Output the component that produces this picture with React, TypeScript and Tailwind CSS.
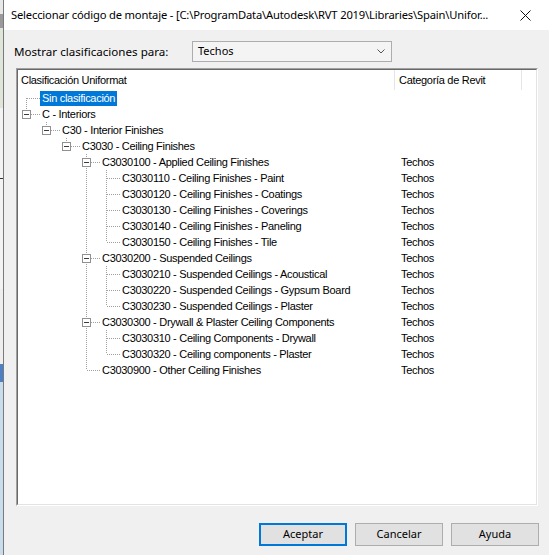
import React from "react";

type Node = { level: number; label: string; kids?: boolean; cat?: string; sel?: boolean };

const rows: Node[] = [
  { level: 0, label: "Sin clasificación", sel: true },
  { level: 0, label: "C - Interiors", kids: true },
  { level: 1, label: "C30 - Interior Finishes", kids: true },
  { level: 2, label: "C3030 - Ceiling Finishes", kids: true },
  { level: 3, label: "C3030100 - Applied Ceiling Finishes", kids: true, cat: "Techos" },
  { level: 4, label: "C3030110 - Ceiling Finishes - Paint", cat: "Techos" },
  { level: 4, label: "C3030120 - Ceiling Finishes - Coatings", cat: "Techos" },
  { level: 4, label: "C3030130 - Ceiling Finishes - Coverings", cat: "Techos" },
  { level: 4, label: "C3030140 - Ceiling Finishes - Paneling", cat: "Techos" },
  { level: 4, label: "C3030150 - Ceiling Finishes - Tile", cat: "Techos" },
  { level: 3, label: "C3030200 - Suspended Ceilings", kids: true, cat: "Techos" },
  { level: 4, label: "C3030210 - Suspended Ceilings - Acoustical", cat: "Techos" },
  { level: 4, label: "C3030220 - Suspended Ceilings - Gypsum Board", cat: "Techos" },
  { level: 4, label: "C3030230 - Suspended Ceilings - Plaster", cat: "Techos" },
  { level: 3, label: "C3030300 - Drywall & Plaster Ceiling Components", kids: true, cat: "Techos" },
  { level: 4, label: "C3030310 - Ceiling Components - Drywall", cat: "Techos" },
  { level: 4, label: "C3030320 - Ceiling components - Plaster", cat: "Techos" },
  { level: 3, label: "C3030900 - Other Ceiling Finishes", cat: "Techos" },
];

// does row i have a following sibling at the same level
const hasNext = (i: number) => {
  for (let j = i + 1; j < rows.length; j++) {
    if (rows[j].level < rows[i].level) return false;
    if (rows[j].level === rows[i].level) return true;
  }
  return false;
};

const ancestorAt = (i: number, lvl: number) => {
  for (let j = i; j >= 0; j--) if (rows[j].level === lvl) return j;
  return -1;
};

const LINE = "#a0a0a0";

function Connector({ i }: { i: number }) {
  const r = rows[i];
  const top = i === 0 ? 8 : 0;
  const bottom = hasNext(i) ? 16 : 8;
  return (
    <svg width="22" height="16" className="shrink-0" shapeRendering="crispEdges">
      <line x1="8.5" y1={top} x2="8.5" y2={bottom} stroke={LINE} strokeDasharray="1 1" />
      <line x1="9" y1="8.5" x2="22" y2="8.5" stroke={LINE} strokeDasharray="1 1" />
      {r.kids && (
        <>
          <rect x="4.5" y="4.5" width="8" height="8" fill="#fff" stroke="#919191" />
          <line x1="6" y1="8.5" x2="11" y2="8.5" stroke="#3c3c3c" />
        </>
      )}
    </svg>
  );
}

function TreeRow({ i }: { i: number }) {
  const r = rows[i];
  const cols = Array.from({ length: r.level }, (_, l) => hasNext(ancestorAt(i, l)));
  return (
    <div className="flex h-[16px] items-center">
      <div className="flex w-[377px] items-center">
        {cols.map((full, l) => (
          <svg key={l} width="20" height="16" className="shrink-0" shapeRendering="crispEdges">
            {full && <line x1="8.5" y1="0" x2="8.5" y2="16" stroke={LINE} strokeDasharray="1 1" />}
          </svg>
        ))}
        <Connector i={i} />
        <span
          className={`h-[15px] whitespace-nowrap px-[2px] leading-[15px] ${
            r.sel ? "bg-[#0078d7] text-white" : "text-black"
          }`}
        >
          {r.label}
        </span>
      </div>
      <span className="pl-[6px] text-black">{r.cat}</span>
    </div>
  );
}

export default function App() {
  return (
    <div className="flex h-[555px] w-[549px] overflow-hidden bg-[#f0f0f0] font-['Noto_Sans',sans-serif] text-[11px] text-black">
      {/* window behind */}
      <div className="flex w-[3px] shrink-0 flex-col">
        <div className="h-[14px] bg-[#e8e8e8]" />
        <div className="h-[14px] bg-[#9a9a9a]" />
        <div className="h-[80px] bg-[#dfe5d8]" />
        <div className="h-[70px] bg-[#f3f3f3]" />
        <div className="h-px bg-[#333]" />
        <div className="h-[110px] bg-[#f3f3f3]" />
        <div className="h-[75px] bg-[#eeeeee]" />
        <div className="h-[18px] bg-[#4c7fc4]" />
        <div className="flex-1 bg-[#c9dcec]" />
      </div>
      <div className="w-px shrink-0 bg-[#7a7a7a]" />

      <div className="flex min-w-0 flex-1 flex-col">
        {/* title bar */}
        <div className="flex h-[30px] items-center justify-between bg-white pl-[7px] pr-[18px]">
          <span className="whitespace-nowrap text-[11.2px] tracking-[-0.17px]">
            Seleccionar código de montaje - [C:\ProgramData\Autodesk\RVT 2019\Libraries\Spain\Unifor...
          </span>
          <svg width="11" height="11" viewBox="0 0 11 11" className="shrink-0">
            <path d="M0.5 0.5 L10.5 10.5 M10.5 0.5 L0.5 10.5" stroke="#111" strokeWidth="1" />
          </svg>
        </div>

        {/* filter */}
        <div className="mt-[11px] flex h-[21px] items-center pl-[10px]">
          <span className="w-[178px] text-[11.6px]">Mostrar clasificaciones para:</span>
          <div className="flex h-[21px] w-[200px] items-center justify-between border border-[#adadad] bg-[#f4f4f4] pl-[5px] pr-[6px]">
            <span>Techos</span>
            <svg width="8" height="5" viewBox="0 0 8 5">
              <path d="M0.5 0.5 L4 4 L7.5 0.5" fill="none" stroke="#555" />
            </svg>
          </div>
        </div>

        {/* tree list */}
        <div className="ml-[12px] mt-[6px] h-[438px] w-[522px] border border-[#a0a0a0] border-b-white border-r-white">
          <div className="flex h-full flex-col border border-[#696969] border-b-[#e3e3e3] border-r-[#e3e3e3] bg-white font-['Liberation_Sans',sans-serif] text-[11px] tracking-[-0.3px]">
            <div className="flex h-[20px] shrink-0 items-center">
              <div className="flex h-full w-[377px] items-center border-r border-[#e5e5e5] pl-[3px]">
                Clasificación Uniformat
              </div>
              <div className="flex h-full w-[127px] items-center border-r border-[#e5e5e5] pl-[4px]">
                Categoría de Revit
              </div>
            </div>
            <div className="flex flex-col">
              {rows.map((_, i) => (
                <TreeRow key={i} i={i} />
              ))}
            </div>
          </div>
        </div>

        {/* buttons */}
        <div className="mt-[17px] flex justify-end gap-[8px] pr-[10px]">
          <button className="h-[23px] w-[88px] border-2 border-[#0078d7] bg-[#e1e1e1]">Aceptar</button>
          <button className="h-[23px] w-[88px] border border-[#adadad] bg-[#e1e1e1]">Cancelar</button>
          <button className="h-[23px] w-[88px] border border-[#adadad] bg-[#e1e1e1]">Ayuda</button>
        </div>
      </div>
    </div>
  );
}
